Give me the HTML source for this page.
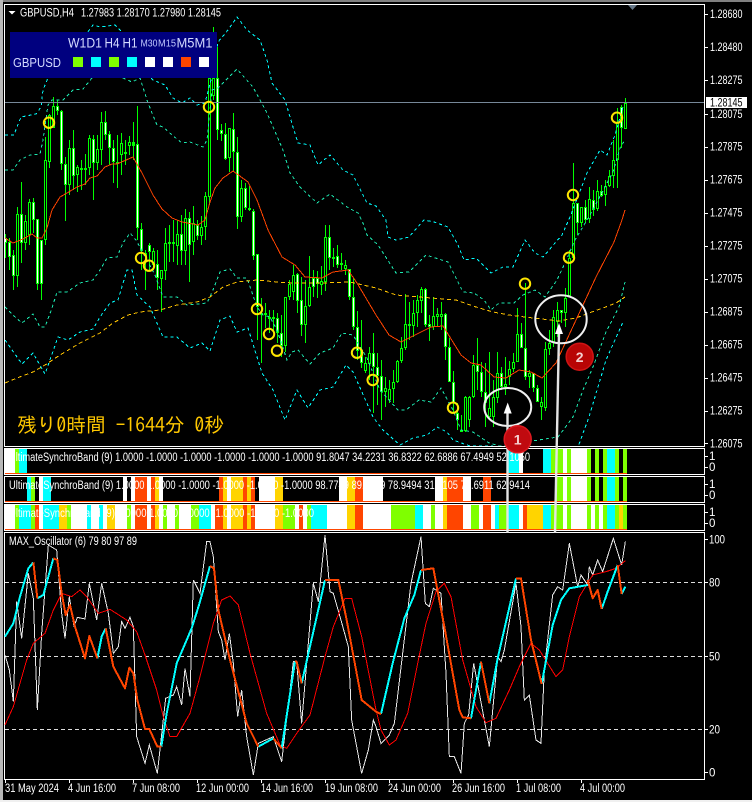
<!DOCTYPE html>
<html><head><meta charset="utf-8"><style>
html,body{margin:0;padding:0;background:#000;width:752px;height:802px;overflow:hidden}
svg{display:block}
text{font-family:"Liberation Sans","Noto Sans CJK JP",sans-serif;fill:#fff;font-size:11.5px}
.l{fill:none;shape-rendering:crispEdges}
.c{fill:none;stroke-width:3;stroke:#0f0;shape-rendering:crispEdges}
</style></head><body>
<svg width="752" height="802" viewBox="0 0 752 802" xmlns="http://www.w3.org/2000/svg">
<defs><clipPath id="m"><rect x="5" y="5" width="699" height="441"/></clipPath></defs>
<rect width="752" height="802" fill="#000"/>
<rect x="0" y="0" width="752" height="2" fill="#808080"/>
<rect x="0" y="0" width="3" height="802" fill="#b8b8b8"/>
<rect x="0" y="800" width="752" height="2" fill="#f0f0f0"/>

<g clip-path="url(#m)">
<path class="l" stroke="#0f0" d="M5.5 234V258M9.5 238V270M13.5 250V290M17.5 207V287M21.5 182V263M25.5 215V250M29.5 199V245M33.5 198V233M37.5 219V290M41.5 240V300M45.5 137V245M49.5 114V168M53.5 97V128M57.5 100V115M61.5 110V170M65.5 157V221M69.5 140V195M73.5 130V190M77.5 165V192M81.5 160V190M85.5 154V185M89.5 135V175M93.5 135V200M97.5 135V170M101.5 112V165M105.5 111V140M109.5 131V165M113.5 140V183M117.5 135V188M121.5 133V175M125.5 140V165M129.5 136V155M133.5 122V160M137.5 106V240M141.5 223V270M145.5 250V290M149.5 243V270M153.5 248V270M157.5 250V290M161.5 270V312M165.5 228V280M169.5 225V262M173.5 220V262M177.5 220V265M181.5 215V265M185.5 209V265M189.5 212V282M193.5 206V255M197.5 220V240M201.5 216V245M205.5 192V240M209.5 78V205M213.5 27V100M217.5 47V140M221.5 124V141M225.5 123V160M229.5 128V172M233.5 113V172M237.5 137V229M241.5 180V222M245.5 183V210M249.5 186V211M253.5 209V260M257.5 254V340M261.5 298V363M265.5 303V328M269.5 310V333M273.5 310V333M277.5 313V343M281.5 315V357M285.5 297V352M289.5 280V300M293.5 265V300M297.5 273V313M301.5 277V336M305.5 280V343M309.5 256V307M313.5 270V297M317.5 271V298M321.5 266V295M325.5 225V291M329.5 225V270M333.5 248V267M337.5 245V268M341.5 253V270M345.5 260V275M349.5 269V300M353.5 278V330M357.5 311V360M361.5 320V368M365.5 357V373M369.5 347V380M373.5 333V413M377.5 353V405M381.5 360V420M385.5 377V407M389.5 380V403M393.5 370V403M397.5 360V383M401.5 337V363M405.5 294V350M409.5 302V340M413.5 300V337M417.5 295V327M421.5 287V313M425.5 288V327M429.5 315V341M433.5 297V330M437.5 308V327M441.5 302V330M445.5 313V360M449.5 338V382M453.5 371V413M457.5 403V430M461.5 415V432M465.5 396V432M469.5 396V427M473.5 355V398M477.5 338V390M481.5 362V397M485.5 363V427M489.5 352V418M493.5 380V427M497.5 352V403M501.5 367V390M505.5 357V395M509.5 361V385M513.5 353V372M517.5 308V362M521.5 323V348M525.5 283V380M529.5 370V388M533.5 373V392M537.5 385V402M541.5 397V420M545.5 342V411M549.5 330V355M553.5 310V347M557.5 302V337M561.5 310V323M565.5 288V327M569.5 250V297M573.5 163V258M577.5 203V235M581.5 207V227M585.5 200V223M589.5 187V223M593.5 190V216M597.5 180V211M601.5 185V197M605.5 180V206M609.5 170V187M613.5 140V188M617.5 108V188M621.5 105V148M625.5 98V129"/>
<path class="c" d="M5.5 238V243M9.5 242V257M13.5 255V276M17.5 214V276M21.5 214V243M25.5 221V243M29.5 202V235M33.5 202V220M37.5 219V284M41.5 240V284M45.5 160V240M49.5 115V162M53.5 106V128M57.5 106V111M61.5 111V164M65.5 164V185M69.5 148V185M73.5 148V176M77.5 167V175M81.5 168V170M85.5 168V170M89.5 138V168M93.5 139V163M97.5 149V163M101.5 122V150M105.5 122V135M109.5 134V148M113.5 148V162M117.5 162V164M121.5 143V155M125.5 152V154M129.5 142V146M133.5 142V146M137.5 144V228M141.5 229V251M145.5 253V256M149.5 245V252M153.5 251V265M157.5 264V278M161.5 270V279M165.5 243V271M169.5 242V244M173.5 242V244M177.5 234V246M181.5 234V251M185.5 218V251M189.5 218V245M193.5 223V242M197.5 225V236M201.5 227V236M205.5 196V227M209.5 78V197M213.5 78V96M217.5 78V130M221.5 130V134M225.5 134V159M229.5 128V158M233.5 129V152M237.5 152V217M241.5 188V217M245.5 188V208M249.5 208V210M253.5 211V256M257.5 254V307M261.5 313V315M265.5 313V315M269.5 317V319M273.5 317V319M277.5 318V333M281.5 333V346M285.5 297V346M289.5 284V297M293.5 275V292M297.5 274V301M301.5 300V325M305.5 306V325M309.5 287V306M313.5 278V287M317.5 278V284M321.5 281V285M325.5 237V282M329.5 237V258M333.5 257V259M337.5 256V265M341.5 263V265M345.5 265V269M349.5 269V297M353.5 297V327M357.5 327V351M361.5 350V363M365.5 363V371M369.5 353V364M373.5 353V367M377.5 367V376M381.5 376V392M385.5 388V392M389.5 389V400M393.5 382V389M397.5 361V382M401.5 348V361M405.5 324V348M409.5 324V326M413.5 313V326M417.5 300V313M421.5 289V301M425.5 289V325M429.5 324V327M433.5 316V327M437.5 314V317M441.5 314V317M445.5 314V347M449.5 347V382M453.5 382V403M457.5 413V420M461.5 430V432M465.5 397V431M469.5 397V420M473.5 365V397M477.5 365V372M481.5 372V392M485.5 392V403M489.5 408V417M493.5 397V417M497.5 373V398M501.5 373V387M505.5 384V387M509.5 369V377M513.5 362V369M517.5 334V362M521.5 334V348M525.5 348V377M529.5 373V377M533.5 373V388M537.5 388V402M541.5 402V407M545.5 349V408M549.5 343V349M553.5 317V343M557.5 310V322M561.5 310V313M565.5 298V313M569.5 258V296M573.5 203V258M577.5 203V223M581.5 207V223M585.5 207V220M589.5 199V219M593.5 200V210M597.5 191V209M601.5 191V196M605.5 186V195M609.5 176V186M613.5 160V176M617.5 122V160M621.5 107V128M625.5 103V129"/>
<path class="l" stroke="#fff" d="M5.5 239V242M9.5 243V256M13.5 256V275M21.5 215V242M33.5 203V219M37.5 220V283M41.5 241V283M57.5 107V110M61.5 112V163M65.5 165V184M73.5 149V175M93.5 140V162M105.5 123V134M109.5 135V147M113.5 149V161M137.5 145V227M141.5 230V250M149.5 246V251M157.5 265V277M181.5 235V250M189.5 219V244M197.5 226V235M217.5 79V129M221.5 131V133M225.5 135V158M233.5 130V151M237.5 153V216M245.5 189V207M253.5 212V255M257.5 255V306M277.5 319V332M281.5 334V345M297.5 275V300M301.5 301V324M313.5 279V286M317.5 279V283M329.5 238V257M337.5 257V264M349.5 270V296M353.5 298V326M357.5 328V350M361.5 351V362M373.5 354V366M377.5 368V375M381.5 377V391M425.5 290V324M429.5 325V326M445.5 315V346M449.5 348V381M453.5 383V402M457.5 414V419M477.5 366V371M481.5 373V391M485.5 393V402M501.5 374V386M521.5 335V347M525.5 349V376M533.5 374V387M537.5 389V401M561.5 311V312M577.5 204V222M585.5 208V219M593.5 201V209M601.5 192V195M621.5 108V127"/>
<path class="l" stroke="#000" d="M17.5 215V275M25.5 222V242M29.5 203V234M45.5 161V239M49.5 116V161M53.5 107V127M69.5 149V184M77.5 168V174M89.5 139V167M97.5 150V162M101.5 123V149M121.5 144V154M129.5 143V145M145.5 254V255M153.5 252V264M161.5 271V278M165.5 244V270M177.5 235V245M185.5 219V250M193.5 224V241M201.5 228V235M205.5 197V226M209.5 79V196M213.5 79V95M229.5 129V157M241.5 189V216M285.5 298V345M289.5 285V296M293.5 276V291M305.5 307V324M309.5 288V305M321.5 282V284M325.5 238V281M345.5 266V268M365.5 364V370M369.5 354V363M385.5 389V391M389.5 390V399M393.5 383V388M397.5 362V381M401.5 349V360M405.5 325V347M413.5 314V325M417.5 301V312M421.5 290V300M433.5 317V326M437.5 315V316M441.5 315V316M465.5 398V430M469.5 398V419M473.5 366V396M489.5 409V416M493.5 398V416M497.5 374V397M505.5 385V386M509.5 370V376M513.5 363V368M517.5 335V361M529.5 374V376M541.5 403V406M545.5 350V407M549.5 344V348M553.5 318V342M557.5 311V321M565.5 299V312M569.5 259V295M573.5 204V257M581.5 208V222M589.5 200V218M597.5 192V208M605.5 187V194M609.5 177V185M613.5 161V175M617.5 123V159M625.5 104V128"/>

<!-- bands -->
<g fill="none" stroke-width="1" shape-rendering="crispEdges">
<polyline stroke="#00ffff" stroke-dasharray="3 3" points="5,135 14,135 17,127 21,117 36,114 41,107 43,90 48,78 60,60 78,45 93,25 100,27 115,25 122,32 135,60 153,80 165,85 173,98 182,103 190,98 197,105 205,103 211,80 218,42 228,30 237,17 247,30 260,40 267,60 272,83 285,100 293,127 298,143 310,145 318,165 330,155 343,170 353,175 367,203 376,206 386,220 388,237 396,240 409,237 424,220 434,222 448,227 458,245 464,260 476,258 491,273 503,267 513,267 525,240 535,253 543,257 562,235 570,217 587,173 600,150 607,155 615,135 623,107"/>
<polyline stroke="#1ce8b0" stroke-dasharray="3 3" points="5,170 13,170 20,160 30,155 40,154 43,140 48,105 52,100 63,100 73,90 83,89 92,78 110,72 123,78 132,82 140,78 147,100 152,113 157,125 163,127 172,135 182,143 190,142 203,147 207,140 212,90 218,88 237,69 253,87 267,113 283,150 290,173 300,187 317,203 330,194 347,207 358,213 363,223 367,235 378,245 396,273 409,272 426,255 448,262 463,292 474,293 484,300 491,310 499,303 514,303 523,295 535,290 545,297 557,280 565,263 575,240 590,215 613,172 620,148 625,140"/>
<polyline stroke="#1ce8b0" stroke-dasharray="3 3" points="5,307 13,315 22,323 33,314 40,327 45,327 52,308 57,292 67,292 80,283 93,280 100,270 107,258 117,257 123,243 130,233 136,240 155,275 163,297 177,297 187,305 207,303 213,290 220,272 230,269 237,278 247,278 257,307 263,315 270,317 277,330 287,360 292,352 298,350 310,364 320,353 333,348 342,333 353,335 367,358 380,390 398,410 406,410 419,400 431,402 441,388 453,410 461,430 473,432 489,443 500,446 558,437 573,417 583,390 593,367 606,332 619,307 625,282"/>
<polyline stroke="#00ffff" stroke-dasharray="3 3" points="5,340 22,364 33,353 45,374 58,337 68,340 80,332 93,329 100,317 110,303 118,300 127,270 132,270 137,295 150,307 163,337 177,337 190,348 202,343 210,351 220,320 230,316 237,332 248,328 262,373 273,390 285,420 297,390 308,408 320,390 333,387 346,365 353,372 373,417 383,430 400,445 413,438 427,435 437,427 447,432 453,440 470,446 560,447 578,447 589,417 606,360 623,322"/>
<polyline stroke="#ffc400" stroke-dasharray="4 3" points="5,383 17,378 33,372 45,365 60,355 80,343 100,333 113,323 128,315 140,312 160,310 177,305 197,302 210,297 223,287 237,282 257,280 277,282 293,283 320,283 350,282 376,288 396,295 419,297 456,300 476,307 493,312 509,315 533,318 559,321 576,318 589,313 603,308 616,303 625,297"/>
<polyline stroke="#ff4400" points="5,238 13,243 23,239 32,234 37,238 42,238 47,228 52,210 60,197 67,193 77,187 85,184 90,178 97,176 105,167 112,164 117,164 133,157 142,173 153,195 162,209 172,218 182,222 198,225 205,220 210,202 215,188 223,178 233,171 248,182 257,200 268,230 282,257 295,265 305,277 322,278 333,272 348,270 357,283 376,315 389,335 401,342 419,333 431,327 443,326 461,355 471,363 481,365 494,377 506,378 519,370 531,372 542,378 556,363 576,320 596,277 614,242 622,220 625,210"/>
</g>
<line x1="5" y1="102.5" x2="704" y2="102.5" stroke="#778899" shape-rendering="crispEdges"/>
</g>

<!-- frame -->
<g shape-rendering="crispEdges" fill="none" stroke="#fff">
<rect x="4.5" y="4.5" width="700" height="442"/>
<rect x="4.5" y="448.5" width="700" height="26"/>
<rect x="4.5" y="476.5" width="700" height="26"/>
<rect x="4.5" y="504.5" width="700" height="26"/>
<rect x="4.5" y="532.5" width="700" height="247"/>
</g>

<polygon points="628,5 637,5 632.5,10" fill="#667788"/>

<!-- panel -->
<rect x="10" y="32" width="207" height="46" fill="#00007f"/>
<line x1="217.5" y1="47" x2="217.5" y2="78" stroke="#0f0" shape-rendering="crispEdges"/>
<g style="fill:#d4daff">
<text x="68" y="47.5" textLength="34" lengthAdjust="spacingAndGlyphs" style="font-size:14px;fill:#d4daff">W1D1</text>
<text x="104.5" y="47.5" textLength="15" lengthAdjust="spacingAndGlyphs" style="font-size:14px;fill:#d4daff">H4</text>
<text x="122.5" y="47.5" textLength="15" lengthAdjust="spacingAndGlyphs" style="font-size:14px;fill:#d4daff">H1</text>
<text x="140.5" y="46.5" textLength="17" lengthAdjust="spacingAndGlyphs" style="font-size:10px;fill:#c0c8ff">M30</text>
<text x="158" y="46.5" textLength="18" lengthAdjust="spacingAndGlyphs" style="font-size:10px;fill:#c0c8ff">M15</text>
<text x="176.5" y="47.5" textLength="36" lengthAdjust="spacingAndGlyphs" style="font-size:14px;fill:#d4daff">M5M1</text>
<text x="13" y="67" textLength="48" lengthAdjust="spacingAndGlyphs" style="font-size:13px;fill:#d4daff">GBPUSD</text>
</g>
<g shape-rendering="crispEdges">
<rect x="73" y="57" width="10" height="10" fill="#7fff00"/>
<rect x="91" y="57" width="10" height="10" fill="#00ffff"/>
<rect x="109" y="57" width="10" height="10" fill="#7fff00"/>
<rect x="127" y="57" width="10" height="10" fill="#00ffff"/>
<rect x="145" y="57" width="10" height="10" fill="#fff"/>
<rect x="163" y="57" width="10" height="10" fill="#fff"/>
<rect x="181" y="57" width="10" height="10" fill="#ff4500"/>
<rect x="199" y="57" width="10" height="10" fill="#fff"/>
</g>

<!-- header -->
<polygon points="8.5,11 15.5,11 12,14.5" fill="#fff"/>
<text x="20" y="16.5" textLength="54" lengthAdjust="spacingAndGlyphs">GBPUSD,H4</text>
<text x="81" y="16.5" textLength="140" lengthAdjust="spacingAndGlyphs">1.27983 1.28170 1.27980 1.28145</text>

<!-- yellow circles -->
<g fill="none" stroke="#ffe600" stroke-width="2">
<circle cx="49" cy="122.7" r="5.2"/><circle cx="209" cy="107" r="5.2"/><circle cx="141" cy="258" r="5.2"/><circle cx="149" cy="265.7" r="5.2"/><circle cx="257" cy="309" r="5.2"/><circle cx="269" cy="334" r="5.2"/><circle cx="277" cy="350.7" r="5.2"/><circle cx="357" cy="352.7" r="5.2"/><circle cx="372.7" cy="380" r="5.2"/><circle cx="453" cy="407.7" r="5.2"/><circle cx="525" cy="283.7" r="5.2"/><circle cx="569" cy="257.7" r="5.2"/><circle cx="573" cy="195" r="5.2"/><circle cx="617" cy="117.7" r="5.2"/>
</g>

<!-- timer -->
<text x="17" y="432" textLength="207" lengthAdjust="spacingAndGlyphs" style='font-family:"IPAGothic","Noto Sans CJK JP",sans-serif;font-size:20px;fill:#ffc800'>残り0時間 -1644分 0秒</text>

<!-- price axis -->
<path class="l" stroke="#fff" d="M705 14.5h3M705 47.5h3M705 80.5h3M705 114.5h3M705 147.5h3M705 180.5h3M705 213.5h3M705 246.5h3M705 279.5h3M705 312.5h3M705 345.5h3M705 378.5h3M705 411.5h3M705 443.5h3M705 456.5h3M705 467.5h3M705 484.5h3M705 495.5h3M705 512.5h3M705 523.5h3M705 539.5h3M705 582.5h3M705 656.5h3M705 729.5h3M705 772.5h3"/>
<g>
<text x="710" y="18" textLength="32.5" lengthAdjust="spacingAndGlyphs">1.28680</text>
<text x="710" y="51" textLength="32.5" lengthAdjust="spacingAndGlyphs">1.28480</text>
<text x="710" y="84" textLength="32.5" lengthAdjust="spacingAndGlyphs">1.28275</text>
<text x="710" y="118" textLength="32.5" lengthAdjust="spacingAndGlyphs">1.28075</text>
<text x="710" y="150.5" textLength="32.5" lengthAdjust="spacingAndGlyphs">1.27875</text>
<text x="710" y="183.5" textLength="32.5" lengthAdjust="spacingAndGlyphs">1.27675</text>
<text x="710" y="216.5" textLength="32.5" lengthAdjust="spacingAndGlyphs">1.27475</text>
<text x="710" y="249.5" textLength="32.5" lengthAdjust="spacingAndGlyphs">1.27275</text>
<text x="710" y="282.5" textLength="32.5" lengthAdjust="spacingAndGlyphs">1.27075</text>
<text x="710" y="315.5" textLength="32.5" lengthAdjust="spacingAndGlyphs">1.26875</text>
<text x="710" y="348.5" textLength="32.5" lengthAdjust="spacingAndGlyphs">1.26675</text>
<text x="710" y="381.5" textLength="32.5" lengthAdjust="spacingAndGlyphs">1.26475</text>
<text x="710" y="414.5" textLength="32.5" lengthAdjust="spacingAndGlyphs">1.26275</text>
<text x="710" y="447.5" textLength="32.5" lengthAdjust="spacingAndGlyphs">1.26075</text>
</g>
<rect x="706" y="97" width="41" height="11" fill="#fff"/>
<text x="710" y="106.5" textLength="32.5" lengthAdjust="spacingAndGlyphs" style="fill:#000">1.28145</text>

<text x="709" y="460">1</text><text x="709" y="471">0</text>
<text x="709" y="488">1</text><text x="709" y="499">0</text>
<text x="709" y="516">1</text><text x="709" y="527">0</text>
<text x="709" y="543.5" textLength="16" lengthAdjust="spacingAndGlyphs">100</text>
<text x="709" y="586.5" textLength="11" lengthAdjust="spacingAndGlyphs">80</text>
<text x="709" y="660.5" textLength="11" lengthAdjust="spacingAndGlyphs">50</text>
<text x="709" y="733.5" textLength="11" lengthAdjust="spacingAndGlyphs">20</text>
<text x="709" y="776.5">0</text>

<!-- color rows -->
<g shape-rendering="crispEdges">
<!-- row1 -->
<g transform="translate(0 449)">
<rect x="5" width="10" height="24" fill="#fff"/><rect x="15" width="4" height="24" fill="#7fff00"/><rect x="19" width="8" height="24" fill="#0ff"/>
<rect x="508" width="11" height="24" fill="#0ff"/><rect x="519" width="4" height="24" fill="#fff"/>
<rect x="543" width="8" height="24" fill="#0ff"/><rect x="551" width="12" height="24" fill="#7fff00"/><rect x="563" width="4" height="24" fill="#fff"/><rect x="567" width="4" height="24" fill="#7fff00"/><rect x="571" width="16" height="24" fill="#fff"/><rect x="587" width="4" height="24" fill="#7fff00"/><rect x="595" width="4" height="24" fill="#7fff00"/><rect x="603" width="4" height="24" fill="#7fff00"/><rect x="607" width="8" height="24" fill="#0ff"/><rect x="615" width="4" height="24" fill="#7fff00"/><rect x="623" width="4" height="24" fill="#7fff00"/>
</g>
<!-- row2 -->
<g transform="translate(0 477)">
<rect x="27" width="4" height="24" fill="#0ff"/><rect x="31" width="4" height="24" fill="#7fff00"/><rect x="39" width="4" height="24" fill="#fff"/><rect x="43" width="8" height="24" fill="#0ff"/>
<rect x="123" width="4" height="24" fill="#fff"/><rect x="131" width="4" height="24" fill="#fff"/><rect x="135" width="12" height="24" fill="#ff4500"/><rect x="147" width="4" height="24" fill="#fff"/><rect x="151" width="4" height="24" fill="#ff4500"/><rect x="155" width="4" height="24" fill="#ffd400"/><rect x="159" width="4" height="24" fill="#fff"/>
<rect x="219" width="4" height="24" fill="#ff4500"/><rect x="223" width="4" height="24" fill="#ffd400"/><rect x="227" width="4" height="24" fill="#fff"/><rect x="231" width="12" height="24" fill="#ffd400"/><rect x="243" width="4" height="24" fill="#ff4500"/><rect x="247" width="4" height="24" fill="#ffd400"/><rect x="251" width="4" height="24" fill="#ff4500"/><rect x="259" width="16" height="24" fill="#fff"/><rect x="275" width="8" height="24" fill="#ffd400"/>
<rect x="339" width="8" height="24" fill="#fff"/><rect x="347" width="8" height="24" fill="#ffd400"/><rect x="355" width="8" height="24" fill="#ff4500"/><rect x="363" width="20" height="24" fill="#fff"/>
<rect x="435" width="8" height="24" fill="#fff"/><rect x="443" width="4" height="24" fill="#ffd400"/><rect x="447" width="16" height="24" fill="#ff4500"/><rect x="463" width="8" height="24" fill="#fff"/><rect x="483" width="8" height="24" fill="#ff4500"/>
<rect x="556" width="7" height="24" fill="#7fff00"/><rect x="563" width="4" height="24" fill="#fff"/><rect x="567" width="4" height="24" fill="#7fff00"/><rect x="571" width="16" height="24" fill="#fff"/><rect x="587" width="4" height="24" fill="#7fff00"/><rect x="595" width="4" height="24" fill="#7fff00"/><rect x="603" width="4" height="24" fill="#7fff00"/><rect x="607" width="8" height="24" fill="#0ff"/><rect x="615" width="4" height="24" fill="#7fff00"/><rect x="623" width="4" height="24" fill="#7fff00"/>
</g>
<!-- row3 -->
<g transform="translate(0 505)">
<rect x="5" width="10" height="24" fill="#fff"/><rect x="15" width="4" height="24" fill="#7fff00"/><rect x="19" width="12" height="24" fill="#0ff"/><rect x="31" width="4" height="24" fill="#7fff00"/><rect x="35" width="4" height="24" fill="#ff4500"/><rect x="39" width="4" height="24" fill="#fff"/><rect x="43" width="16" height="24" fill="#0ff"/><rect x="59" width="8" height="24" fill="#ffd400"/><rect x="67" width="4" height="24" fill="#7fff00"/><rect x="71" width="16" height="24" fill="#fff"/><rect x="87" width="4" height="24" fill="#0ff"/><rect x="91" width="8" height="24" fill="#fff"/><rect x="99" width="4" height="24" fill="#0ff"/><rect x="103" width="4" height="24" fill="#fff"/><rect x="107" width="8" height="24" fill="#ffd400"/><rect x="115" width="12" height="24" fill="#fff"/><rect x="127" width="4" height="24" fill="#7fff00"/><rect x="131" width="4" height="24" fill="#fff"/><rect x="135" width="12" height="24" fill="#ff4500"/><rect x="147" width="4" height="24" fill="#fff"/><rect x="151" width="4" height="24" fill="#ff4500"/><rect x="155" width="4" height="24" fill="#ffd400"/><rect x="159" width="4" height="24" fill="#fff"/><rect x="163" width="4" height="24" fill="#7fff00"/><rect x="167" width="8" height="24" fill="#fff"/><rect x="175" width="4" height="24" fill="#7fff00"/><rect x="179" width="12" height="24" fill="#fff"/><rect x="191" width="8" height="24" fill="#7fff00"/><rect x="199" width="12" height="24" fill="#0ff"/><rect x="211" width="4" height="24" fill="#fff"/><rect x="215" width="8" height="24" fill="#ff4500"/><rect x="223" width="4" height="24" fill="#ffd400"/><rect x="227" width="4" height="24" fill="#fff"/><rect x="231" width="12" height="24" fill="#ffd400"/><rect x="243" width="4" height="24" fill="#ff4500"/><rect x="247" width="4" height="24" fill="#ffd400"/><rect x="251" width="4" height="24" fill="#ff4500"/><rect x="255" width="4" height="24" fill="#fff"/><rect x="259" width="16" height="24" fill="#fff"/><rect x="275" width="8" height="24" fill="#ffd400"/><rect x="283" width="12" height="24" fill="#7fff00"/><rect x="295" width="4" height="24" fill="#fff"/><rect x="299" width="4" height="24" fill="#ff4500"/><rect x="303" width="4" height="24" fill="#fff"/><rect x="307" width="4" height="24" fill="#7fff00"/><rect x="311" width="16" height="24" fill="#0ff"/><rect x="327" width="20" height="24" fill="#fff"/><rect x="347" width="8" height="24" fill="#ffd400"/><rect x="355" width="8" height="24" fill="#ff4500"/><rect x="363" width="28" height="24" fill="#fff"/><rect x="391" width="24" height="24" fill="#7fff00"/><rect x="415" width="8" height="24" fill="#0ff"/><rect x="423" width="8" height="24" fill="#fff"/><rect x="431" width="4" height="24" fill="#7fff00"/><rect x="435" width="8" height="24" fill="#fff"/><rect x="443" width="4" height="24" fill="#ffd400"/><rect x="447" width="16" height="24" fill="#ff4500"/><rect x="463" width="8" height="24" fill="#fff"/><rect x="471" width="8" height="24" fill="#7fff00"/><rect x="479" width="4" height="24" fill="#fff"/><rect x="483" width="8" height="24" fill="#ff4500"/><rect x="491" width="4" height="24" fill="#fff"/><rect x="495" width="4" height="24" fill="#0ff"/><rect x="499" width="8" height="24" fill="#7fff00"/><rect x="507" width="12" height="24" fill="#0ff"/><rect x="519" width="4" height="24" fill="#fff"/><rect x="523" width="4" height="24" fill="#ff4500"/><rect x="527" width="16" height="24" fill="#ffd400"/><rect x="543" width="8" height="24" fill="#0ff"/><rect x="551" width="12" height="24" fill="#7fff00"/><rect x="563" width="4" height="24" fill="#fff"/><rect x="567" width="4" height="24" fill="#7fff00"/><rect x="571" width="16" height="24" fill="#fff"/><rect x="587" width="4" height="24" fill="#7fff00"/><rect x="591" width="4" height="24" fill="#fff"/><rect x="595" width="4" height="24" fill="#7fff00"/><rect x="599" width="4" height="24" fill="#fff"/><rect x="603" width="4" height="24" fill="#7fff00"/><rect x="607" width="8" height="24" fill="#0ff"/><rect x="615" width="4" height="24" fill="#7fff00"/><rect x="619" width="4" height="24" fill="#ffd400"/><rect x="623" width="4" height="24" fill="#7fff00"/>
</g>
<rect x="5" y="473" width="622" height="1" fill="#ff4500"/>
<rect x="5" y="501" width="622" height="1" fill="#ff4500"/>
<rect x="5" y="529" width="622" height="1" fill="#ff4500"/>
</g>
<text x="9" y="461" textLength="521" lengthAdjust="spacingAndGlyphs">UltimateSynchroBand (9) 1.0000 -1.0000 -1.0000 -1.0000 -1.0000 -1.0000 91.8047 34.2231 36.8322 62.6886 67.4949 52.1050</text>
<text x="9" y="489" textLength="521" lengthAdjust="spacingAndGlyphs">UltimateSynchroBand (9) 1.0000 1.0000 -1.0000 -1.0000 -1.0000 -1.0000 98.7749 89.4539 78.9494 31.2105 71.6911 62.9414</text>
<text x="9" y="517" textLength="305" lengthAdjust="spacingAndGlyphs">UltimateSynchroBand (9) 1.0000 1.0000 1.0000 -1.0000 -1.0000 -1.0000</text>

<!-- oscillator -->
<path class="l" stroke="#ddd" stroke-dasharray="4 3" d="M5 582.5H704M5 656.5H704M5 729.5H704"/>
<g transform="translate(0 530) scale(.33333)" fill="none" shape-rendering="crispEdges">
<polyline stroke="#e8e8e8" stroke-width="3" points="15,375 28,420 40,515 50,215 65,325 85,130 100,205 112,540 125,310 145,45 170,60 185,250 195,325 208,200 222,290 232,262 255,267 268,160 290,270 305,160 325,250 340,370 355,350 365,275 375,295 390,262 400,290 410,620 435,700 448,645 472,730 497,505 520,495 530,470 545,525 555,415 570,500 580,150 600,190 620,35 630,35 640,80 655,305 665,330 675,390 688,310 700,400 713,560 725,480 740,620 760,735 775,640 820,620 845,695 880,395 890,395 905,580 940,160 955,215 975,15 990,185 1000,190 1020,260 1045,350 1055,570 1085,730 1105,660 1120,570 1128,590"/>
<polyline stroke="#ff0000" stroke-width="3" points="15,585 40,530 60,460 80,390 100,340 135,310 160,240 185,190 215,200 240,180 260,200 295,250 330,238 380,270 410,305 435,375 470,480 490,560 510,620 530,620 570,550 600,440 640,280 665,210 690,198 715,225 750,370 800,550 840,645 860,655 890,610 930,555 975,380 1000,290 1035,205 1055,205 1085,320 1128,540"/>
<g stroke-width="6" stroke-linejoin="round">
<path stroke="#00ffff" d="M15 320L40 280L60 200L85 115L100 97M112 205L130 195L160 85M292 385L305 320L317 295M484 650L500 550L530 400L575 295L597 225L630 108M775 650L820 625M845 655L885 395M905 460L975 150"/>
<path stroke="#ff4500" d="M100 97L112 205M160 85L172 90L185 190L197 255L210 225L225 290L255 385L268 318L292 385M317 295L340 410L375 475L388 413L400 430L412 510L435 597L448 597L472 650L484 650M630 108L642 115L655 240L690 390L740 580L775 650M820 625L845 655M885 395L890 395L905 460M975 150L1015 150L1040 270L1085 510L1128 545"/>
</g>
</g>
<g transform="translate(376 530) scale(.33333)" fill="none" shape-rendering="crispEdges">
<polyline stroke="#e8e8e8" stroke-width="3" points="0,590 15,640 40,615 55,580 105,160 135,20 148,220 160,230 172,175 195,190 210,430 220,680 235,680 255,730 265,580 278,555 293,400 310,490 340,650 365,380 375,395 385,360 420,160 435,290 445,510 460,495 480,630 495,640 505,420 530,195 545,170 560,180 580,40 605,170 615,135 635,165 640,110 650,135 665,90 680,125 712,25 737,105 748,35"/>
<polyline stroke="#ff0000" stroke-width="3" points="0,540 15,600 40,645 60,630 95,550 125,400 150,280 180,185 205,160 225,200 260,390 300,530 330,578 360,565 400,480 430,410 465,340 490,360 540,440 560,420 580,320 610,200 650,135 690,125 720,115 748,92"/>
<g stroke-width="6" stroke-linejoin="round">
<path stroke="#00ffff" d="M15 552L50 400L85 265L115 195L135 120M285 565L315 395M340 520L365 385L420 145M497 462L530 285L555 210L580 175L635 165M677 237L695 185L725 105M737 192L748 170"/>
<path stroke="#ff4500" d="M0 545L15 552M135 120L172 115L205 290L250 540L260 562L285 565M315 395L340 520M420 145L435 145L465 330L497 462M635 150L650 205L665 180L677 237M725 105L737 192"/>
</g>
</g>
<text x="9" y="545" textLength="128" lengthAdjust="spacingAndGlyphs">MAX_Oscillator (6) 79 80 97 89</text>

<!-- time axis -->
<path class="l" stroke="#fff" d="M5.5 780v3M69.5 780v3M133.5 780v3M197.5 780v3M261.5 780v3M325.5 780v3M389.5 780v3M453.5 780v3M517.5 780v3M581.5 780v3"/>
<text x="5" y="792" textLength="54" lengthAdjust="spacingAndGlyphs">31 May 2024</text>
<text x="68" y="792" textLength="48" lengthAdjust="spacingAndGlyphs">4 Jun 16:00</text>
<text x="132" y="792" textLength="48" lengthAdjust="spacingAndGlyphs">7 Jun 08:00</text>
<text x="196" y="792" textLength="53" lengthAdjust="spacingAndGlyphs">12 Jun 00:00</text>
<text x="261" y="792" textLength="52" lengthAdjust="spacingAndGlyphs">14 Jun 16:00</text>
<text x="325" y="792" textLength="53" lengthAdjust="spacingAndGlyphs">19 Jun 08:00</text>
<text x="388" y="792" textLength="53" lengthAdjust="spacingAndGlyphs">24 Jun 00:00</text>
<text x="452" y="792" textLength="53" lengthAdjust="spacingAndGlyphs">26 Jun 16:00</text>
<text x="516" y="792" textLength="45" lengthAdjust="spacingAndGlyphs">1 Jul 08:00</text>
<text x="580" y="792" textLength="45" lengthAdjust="spacingAndGlyphs">4 Jul 00:00</text>

<!-- annotations -->
<g fill="none" stroke="#f0f0f0" stroke-width="2">
<ellipse cx="507.7" cy="407" rx="23.5" ry="19"/>
<ellipse cx="561" cy="319.3" rx="25.7" ry="24"/>
</g>
<line x1="507.5" y1="412" x2="507.5" y2="533" stroke="#e4e4e4" stroke-width="2.4"/>
<polygon points="507.7,402.5 511.7,413.5 503.7,413.5" fill="#fff"/>
<line x1="555" y1="533" x2="559" y2="333" stroke="#e4e4e4" stroke-width="2.4"/>
<polygon points="559,323 563,334 555,334" fill="#fff"/>
<circle cx="517.7" cy="439.3" r="13.5" fill="#c00a0f" stroke="#dc1a20" stroke-width="1.5"/>
<text x="517.7" y="444.5" text-anchor="middle" style="font-size:14px;fill:#f4d0d0;font-weight:bold">1</text>
<circle cx="579.7" cy="356.7" r="13.5" fill="#b80505" stroke="#d01414" stroke-width="1.5"/>
<text x="579.7" y="362" text-anchor="middle" style="font-size:14px;fill:#f4d0d0;font-weight:bold">2</text>
</svg>
</body></html>
